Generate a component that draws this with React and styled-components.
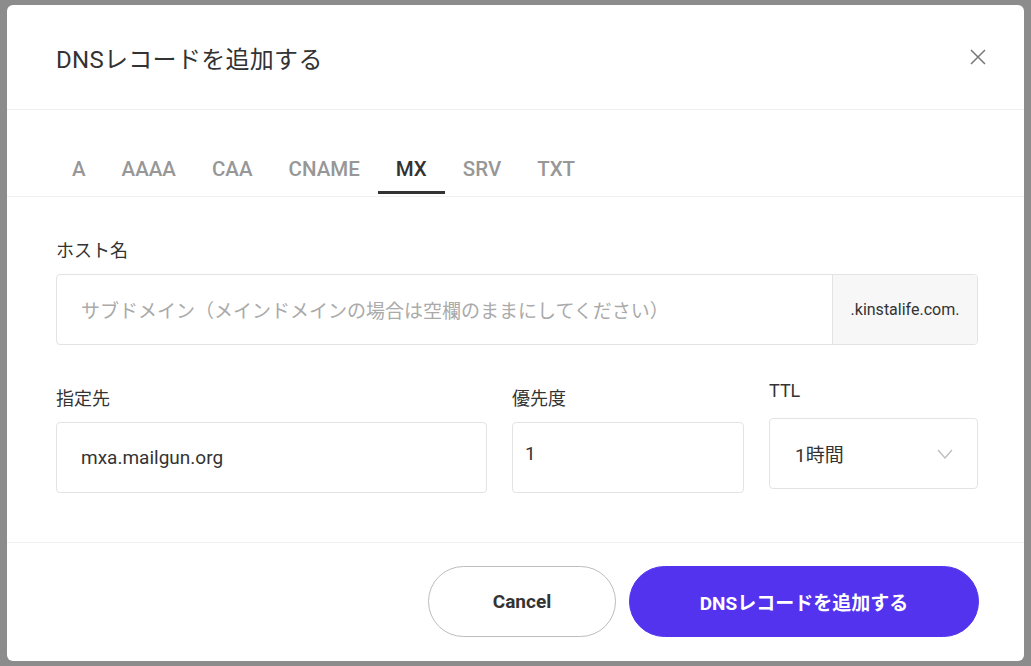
import React from "react";
import styled, { createGlobalStyle } from "styled-components";

const Global = createGlobalStyle`
  html, body { margin: 0; height: 100%; background: #8c8c8c; }
  body { font-family: Roboto, "Noto Sans CJK JP", sans-serif; }
  * { box-sizing: border-box; }
`;

const Page = styled.div`
  padding: 5px 7px;
  height: 666px;
`;
const Modal = styled.div`
  background: #fff;
  border-radius: 6px;
  height: 656px;
  display: flex;
  flex-direction: column;
`;
const Header = styled.div`
  height: 105px;
  border-bottom: 1px solid #efefef;
  display: flex;
  align-items: center;
  justify-content: space-between;
  padding: 0 38px 0 49px;
`;
const Title = styled.h1`
  margin: 0;
  font-size: 24px;
  font-weight: 400;
  color: #333;
  letter-spacing: 0.3px;
`;
const Close = styled.button`
  border: 0; background: none; padding: 0; cursor: pointer; display: flex;
`;
const Tabs = styled.div`
  display: flex;
  padding: 44px 0 0 47px;
  border-bottom: 1px solid #f0f0f0;
  height: 87px;
  align-items: flex-end;
`;
const Tab = styled.div`
  padding: 0 18px 10px;
  font-size: 20.5px;
  font-weight: 500;
  color: ${p => (p.$active ? "#333" : "#979797")};
  border-bottom: 3px solid ${p => (p.$active ? "#333" : "transparent")};
  margin-bottom: 2px;
`;
const Body = styled.div`
  padding: 39px 46px 0 49px;
  display: flex;
  flex-direction: column;
`;
const Label = styled.div`
  font-size: 18px;
  color: #333;
  margin-bottom: 14px;
  height: 24px;
`;
const InputBox = styled.div`
  border: 1px solid #e3e3e3;
  border-radius: 4px;
  height: 71px;
  display: flex;
  align-items: ${p => p.$top ? "flex-start" : "center"};
  padding: ${p => p.$top ? "19px 12px" : "0 0 0 24px"};
  font-size: 19px;
  color: ${p => (p.$ph ? "#aaa" : "#333")};
  overflow: hidden;
`;
const Grow = styled.span`
  flex: 1;
  white-space: nowrap;
`;
const Suffix = styled.div`
  align-self: stretch;
  width: 145px;
  background: #f7f7f7;
  border-left: 1px solid #e3e3e3;
  display: flex;
  align-items: center;
  justify-content: center;
  font-size: 16px;
  color: #333;
`;
const Row = styled.div`
  display: grid;
  grid-template-columns: 431px 232px 209px;
  gap: 25px;
  margin-top: 39px;
  align-items: start;
`;
const Field = styled.div`
  display: flex; flex-direction: column;
  margin-top: ${p => p.$up || 0}px;
`;
const SelectBox = styled(InputBox)`
  padding: 0 24px 0 25px;
  justify-content: space-between;
`;
const Footer = styled.div`
  border-top: 1px solid #f0f0f0;
  margin-top: 49px;
  display: flex;
  justify-content: flex-end;
  gap: 13px;
  padding: 23px 45px 0 0;
`;
const Button = styled.button`
  height: 71px;
  border-radius: 36px;
  font-family: inherit;
  font-size: 19px;
  font-weight: 700;
  width: ${p => p.$w}px;
  border: 1px solid ${p => (p.$primary ? "#5333ed" : "#bdbdbd")};
  background: ${p => (p.$primary ? "#5333ed" : "#fff")};
  color: ${p => (p.$primary ? "#fff" : "#333")};
`;

const tabs = ["A", "AAAA", "CAA", "CNAME", "MX", "SRV", "TXT"];

export default function App() {
  return (
    <Page>
      <Global />
      <Modal>
        <Header>
          <Title>DNSレコードを追加する</Title>
          <Close>
            <svg width="16" height="16" viewBox="0 0 16 16" stroke="#777" strokeWidth="1.5" fill="none">
              <path d="M1 1L15 15M15 1L1 15" />
            </svg>
          </Close>
        </Header>
        <Tabs>
          {tabs.map(t => (
            <Tab key={t} $active={t === "MX"}>{t}</Tab>
          ))}
        </Tabs>
        <Body>
          <Label>ホスト名</Label>
          <InputBox $ph>
            <Grow>サブドメイン（メインドメインの場合は空欄のままにしてください）</Grow>
            <Suffix>.kinstalife.com.</Suffix>
          </InputBox>
          <Row>
            <Field>
              <Label>指定先</Label>
              <InputBox>mxa.mailgun.org</InputBox>
            </Field>
            <Field>
              <Label>優先度</Label>
              <InputBox $top>1</InputBox>
            </Field>
            <Field $up={-4}>
              <Label>TTL</Label>
              <SelectBox>
                <span>1時間</span>
                <svg width="16" height="10" viewBox="0 0 16 10" fill="none" stroke="#bbb" strokeWidth="1.2">
                  <path d="M1 1l7 8 7-8" />
                </svg>
              </SelectBox>
            </Field>
          </Row>
        </Body>
        <Footer>
          <Button $w={188}>Cancel</Button>
          <Button $primary $w={350}>DNSレコードを追加する</Button>
        </Footer>
      </Modal>
    </Page>
  );
}
